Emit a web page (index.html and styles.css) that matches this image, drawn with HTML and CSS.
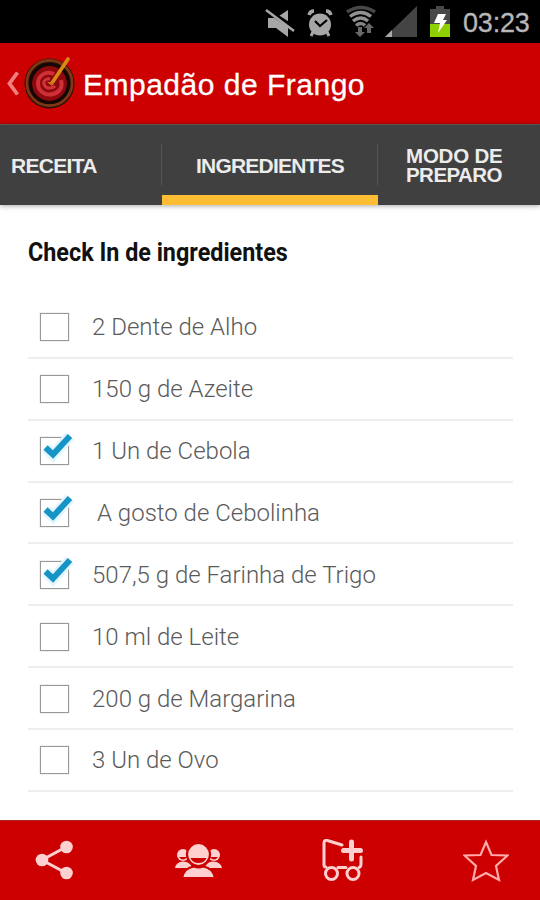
FILE: index.html
```
<!DOCTYPE html>
<html lang="pt-BR">
<head>
<meta charset="utf-8">
<title>Empadão de Frango</title>
<link rel="stylesheet" href="styles.css">
</head>
<body>
<div class="screen">
  <div class="status">
    <svg class="status-icons" width="190" height="43" viewBox="262 0 190 43" aria-hidden="true">
      <g fill="#a6a6a6">
        <path d="M268 18h8l12-8v27l-12-9h-8z"/>
        <path d="M265 9l32 21" stroke="#000" stroke-width="5"/>
        <path d="M266 10l28 21" stroke="#a6a6a6" stroke-width="2.600"/>
        <circle cx="320" cy="24.500" r="11"/>
        <path d="M309 15q1-4 5-4M326 11q4 0 5 4" fill="none" stroke="#a6a6a6" stroke-width="3.400"/>
        <path d="M313 32l-2 4M327 32l2 4" fill="none" stroke="#a6a6a6" stroke-width="3"/>
        <path d="M315 21l5 5 7-6" fill="none" stroke="#000" stroke-width="2.200"/>
      </g>
      <g fill="none" stroke-width="3.400">
        <path d="M347 12q14-9 28 0" stroke="#484848"/>
        <path d="M350 16.500q11-8 21 0" stroke="#929292"/>
        <path d="M353 21q8-6 15 0" stroke="#929292"/>
        <path d="M356 25.500q5-4 9 0" stroke="#858585"/>
      </g>
      <path d="M358 27h4v5h3l-5 5-5-5h3zM367 33v-5h-3l5-5 5 5h-3v5z" fill="#686868"/>
      <path d="M385 37L417 6v31z" fill="#444"/>
      <path d="M385 37l7-7v7z" fill="#aaa"/>
      <path d="M430 9h6V6h8v3h6v15h-20z" fill="#484848"/>
      <path d="M430 24h20v13h-20z" fill="#8fd000"/>
      <path d="M438 14h8l-3 6h4l-9 13 2-10h-6z" fill="#fff"/>
    </svg>
    <span class="clock">03:23</span>
  </div>
  <header class="bar">
    <svg class="brand" width="76" height="81" viewBox="0 43 76 81" aria-hidden="true">
      <path d="M17.500 72.500L9.500 83.500l8 11" fill="none" stroke="#f08080" stroke-width="3.800"/>
      <circle cx="49.500" cy="83.500" r="25" fill="#281008"/>
      <circle cx="49.500" cy="83" r="22.600" fill="none" stroke="#7c3814" stroke-width="2.800"/>
      <circle cx="49.500" cy="83.500" r="17.500" fill="#8e090d"/>
      <circle cx="49.500" cy="83.500" r="19" fill="none" stroke="#160705" stroke-width="3"/>
      <path d="M54 74c-8-4-16 2-16 9 0 9 8 13 15 11 7-2 10-7 8-14" fill="none" stroke="#cf3038" stroke-width="4"/>
      <path d="M50 79c-4-1-7 2-6 5 1 5 8 5 11 2" fill="none" stroke="#d3343a" stroke-width="3"/>
      <path d="M52 83L68 59" stroke="#d98b16" stroke-width="3.600" stroke-linecap="round"/>
      <path d="M47 82l5 4 2-4" fill="#c87519"/>
    </svg>
    <h1>Empadão de Frango</h1>
  </header>
  <nav class="tabs">
    <div class="tab tab-start"><span>RECEITA</span></div>
    <div class="tab tab-active"><span>INGREDIENTES</span></div>
    <div class="tab tab-end"><span>MODO DE</span><span>PREPARO</span></div>
  </nav>
  <main>
    <h2><span class="fit-heading">Check In de ingredientes</span></h2>
    <ul>
      <li><i class="box"></i><span>2 Dente de Alho</span></li>
      <li><i class="box"></i><span>150 g de Azeite</span></li>
      <li><i class="box"><svg class="check" width="40" height="36" viewBox="-4 -5 40 36"><path class="glow" d="M7 12l7 7L31 0"/><path class="tick" d="M6.500 11.500l7.500 7L31 0"/></svg></i><span>1 Un de Cebola</span></li>
      <li><i class="box"><svg class="check" width="40" height="36" viewBox="-4 -5 40 36"><path class="glow" d="M7 12l7 7L31 0"/><path class="tick" d="M6.500 11.500l7.500 7L31 0"/></svg></i><span class="indent">A gosto de Cebolinha</span></li>
      <li><i class="box"><svg class="check" width="40" height="36" viewBox="-4 -5 40 36"><path class="glow" d="M7 12l7 7L31 0"/><path class="tick" d="M6.500 11.500l7.500 7L31 0"/></svg></i><span>507,5 g de Farinha de Trigo</span></li>
      <li><i class="box"></i><span>10 ml de Leite</span></li>
      <li><i class="box"></i><span>200 g de Margarina</span></li>
      <li><i class="box"></i><span>3 Un de Ovo</span></li>
    </ul>
  </main>
  <footer>
    <svg width="40" height="42" viewBox="35 840 40 42"><g fill="#ffd0d0"><path d="M66 847L42 860l24 13" fill="none" stroke="#ffd0d0" stroke-width="3"/><circle cx="66.500" cy="847" r="6.300"/><circle cx="42" cy="860" r="6.300"/><circle cx="66.500" cy="873" r="6.300"/></g></svg>
    <svg width="48" height="36" viewBox="174 843 48 36">
      <g fill="#ffd0d0">
        <circle cx="183" cy="855" r="6"/><circle cx="214" cy="855" r="6"/>
        <path d="M175 868q1-6 8-6.500 8 .5 9 6.500zM205 868q1-6 8-6.500 8 .5 9 6.500z"/>
        <path d="M179 857h8q-4 5-8 0M210 857h8q-4 5-8 0" fill="#c00"/>
        <circle cx="198.500" cy="854.500" r="11.500" stroke="#c00" stroke-width="2.200"/>
        <path d="M182 878q2-10 12-11.500 4.500 2 9 0Q213 868 215 878z" stroke="#c00" stroke-width="2"/>
        <path d="M190.500 858h16q-2 5-8 5t-8-5" fill="#c00"/>
      </g>
    </svg>
    <svg width="44" height="44" viewBox="320 839 44 44"><g fill="none" stroke="#ffd0d0" stroke-width="3" stroke-linecap="round" stroke-linejoin="round"><path d="M342 845l-13-4q-5-2-5 2v22q0 2 2 2M338 867.500h8M361 857v7q0 3-2 3.500"/><circle cx="331.500" cy="873.500" r="6"/><circle cx="353" cy="873.500" r="6"/><path d="M351.500 842v17M343.500 850.500h17" stroke-width="5" stroke-linecap="round"/></g></svg>
    <svg width="46" height="44" viewBox="463 839 46 44"><path d="M486 842l5.500 13 16 .5L496 866l3 14-13-7-13 7 3-14-11.500-10.500 16-.5z" fill="none" stroke="#ffabab" stroke-width="2.200"/></svg>
  </footer>
</div>
</body>
</html>
```
FILE: styles.css
```
* { box-sizing: border-box; }
body { margin: 0; background: #fff; }
.screen {
  width: 540px;
  height: 900px;
  display: flex;
  flex-direction: column;
  overflow: hidden;
  font-family: "Liberation Sans", sans-serif;
}
.status {
  height: 43px;
  background: #000;
  display: flex;
  justify-content: flex-end;
  align-items: center;
  padding-right: 10px;
}
.status-icons { margin-right: 11px; }
.clock {
  width: 67px;
  color: #b8b8b8;
  font-size: 27px;
  line-height: 43px;
  letter-spacing: -0.2px;
  padding-top: 3px;
  -webkit-text-stroke: 0.3px #b8b8b8;
}
.bar {
  height: 81px;
  background: #c00;
  display: flex;
  align-items: center;
}
h1 {
  margin: 2px 0 0 7px;
  color: #fff;
  font-size: 30px;
  line-height: 40px;
  font-weight: 400;
  letter-spacing: 0.5px;
  -webkit-text-stroke: 0.3px #fff;
  white-space: nowrap;
}
.tabs {
  height: 81px;
  background: #404040;
  display: grid;
  grid-template-columns: 162px 216px 162px;
  box-shadow: 0 1px 5px #0005;
  color: #ececec;
  font-size: 21px;
  line-height: 19px;
  font-weight: 700;
  border-top: 1px solid #555;
}
.tab {
  display: flex;
  align-items: center;
  background: linear-gradient(#555, #555) right 0 top 19px / 1px 41px no-repeat;
}
.tab-start { padding-left: 11px; letter-spacing: -0.7px; }
.tab-active {
  justify-content: center;
  padding-top: 10px;
  border-bottom: 10px solid #ffbd33;
  letter-spacing: -0.8px;
}
.tab-end {
  flex-direction: column;
  align-items: flex-start;
  justify-content: center;
  padding-left: 28px;
  background: none;
  font-size: 20.5px;
  letter-spacing: -0.2px;
}
.tab-end span + span { letter-spacing: -0.55px; }
main { flex: 1; padding: 34px 27px 0 28px; }
h2 {
  margin: 0;
  height: 58px;
  font: 700 25px/27px Roboto, sans-serif;
  color: #111;
  white-space: nowrap;
}
.fit-heading { display: inline-block; transform: scaleX(0.934); transform-origin: left center; }
ul { margin: 0; padding: 0; list-style: none; }
li {
  height: 61.86px;
  border-bottom: 2px solid #eee;
  display: flex;
  align-items: center;
  padding: 1px 0 0 12px;
  font: 300 24px/30px Roboto, sans-serif;
  color: #5a5a5a;
  white-space: nowrap;
}
.box {
  position: relative;
  width: 29px;
  height: 28px;
  border: 1.5px solid #999;
  box-shadow: 0 0 1px #aaa;
  margin-right: 23px;
  flex: none;
}
.check { position: absolute; left: -6px; top: -7px; fill: none; overflow: visible; }
.glow { stroke: #e2f6ff; stroke-width: 11; }
.tick { stroke: #1694c6; stroke-width: 6; }
.indent { padding-left: 5px; }
footer {
  height: 80px;
  background: #c00;
  border-top: 1px solid #a22;
  display: flex;
  justify-content: space-between;
  align-items: center;
  padding: 0 31px 0 35px;
}
```
